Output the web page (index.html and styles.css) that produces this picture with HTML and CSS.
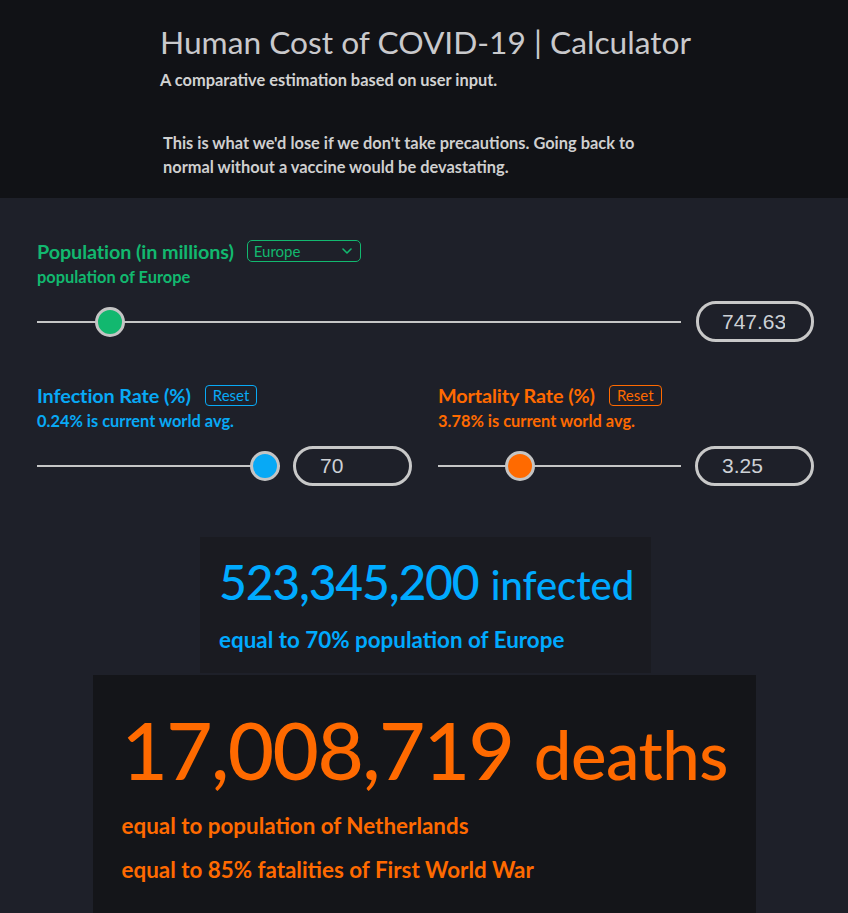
FILE: index.html
```html
<!DOCTYPE html>
<html lang="en">
<head>
<meta charset="utf-8">
<title>Human Cost of COVID-19 | Calculator</title>
<link rel="stylesheet" href="styles.css">
</head>
<body>
<header class="hero">
  <h1 class="title">Human Cost of COVID-19 | Calculator</h1>
  <p class="subtitle">A comparative estimation based on user input.</p>
  <p class="intro">This is what we'd lose if we don't take precautions. Going back to<br>normal without a vaccine would be devastating.</p>
</header>
<main class="main">
  <section class="control green">
    <div class="label-row">
      <span class="label">Population (in millions)</span>
      <div class="select">
        <span>Europe</span>
        <svg class="chev" width="10" height="6" viewBox="0 0 10 6"><path d="M1 1 L5 5 L9 1" fill="none" stroke="currentColor" stroke-width="1.6" stroke-linecap="round" stroke-linejoin="round"/></svg>
      </div>
    </div>
    <div class="hint">population of Europe</div>
    <div class="slider-row wide">
      <div class="slider"><div class="track"></div><div class="thumb" style="left:58px"></div></div>
      <div class="num"><span>747.63</span></div>
    </div>
  </section>
  <div class="cols">
    <section class="control blue">
      <div class="label-row">
        <span class="label">Infection Rate (%)</span>
        <span class="reset">Reset</span>
      </div>
      <div class="hint">0.24% is current world avg.</div>
      <div class="slider-row">
        <div class="slider"><div class="track"></div><div class="thumb" style="left:213px"></div></div>
        <div class="num"><span>70</span></div>
      </div>
    </section>
    <section class="control orange">
      <div class="label-row">
        <span class="label">Mortality Rate (%)</span>
        <span class="reset">Reset</span>
      </div>
      <div class="hint">3.78% is current world avg.</div>
      <div class="slider-row">
        <div class="slider"><div class="track"></div><div class="thumb" style="left:67px"></div></div>
        <div class="num"><span>3.25</span></div>
      </div>
    </section>
  </div>
  <div class="results">
    <div class="card infected">
      <div class="big"><span class="n">523,345,200</span> <span class="w">infected</span></div>
      <p class="eq">equal to 70% population of Europe</p>
    </div>
    <div class="card deaths">
      <div class="big"><span class="n">17,008,719</span> <span class="w">deaths</span></div>
      <p class="eq">equal to population of Netherlands</p>
      <p class="eq">equal to 85% fatalities of First World War</p>
    </div>
  </div>
</main>
</body>
</html>
```
FILE: styles.css
```css
* { box-sizing: border-box; }
html, body { margin: 0; padding: 0; }
body {
  background: #1e2029;
  font-family: Lato, "Open Sans", sans-serif;
  color: #c8c8c8;
  width: 848px;
  height: 913px;
  overflow: hidden;
}
.hero {
  background: #111216;
  height: 198px;
  padding: 22px 0 0 160px;
}
.title {
  margin: 0;
  font-size: 31.7px;
  line-height: 40px;
  font-weight: 400;
  color: #c9c9cc;
}
.subtitle {
  margin: 8px 0 0;
  font-size: 16.4px;
  line-height: 20px;
  font-weight: 700;
  color: #d2d2d2;
}
.intro {
  margin: 41px 0 0 3px;
  font-size: 16.4px;
  line-height: 24px;
  font-weight: 700;
  color: #cfcfcf;
}
.main {
  padding: 42px 34px 0 37px;
}
.green { color: #12b86f; }
.blue { color: #08a9f5; }
.orange { color: #ff6a00; }
.label-row {
  display: flex;
  align-items: center;
  height: 22px;
}
.label {
  font-size: 19.8px;
  font-weight: 700;
  letter-spacing: -0.1px;
}
.select {
  margin-left: 13px;
  width: 114px;
  height: 22px;
  border: 1px solid currentColor;
  border-radius: 5px;
  display: flex;
  align-items: center;
  justify-content: space-between;
  padding: 0 8px 0 6px;
  font-size: 15px;
}
.chev { display: block; }
.reset {
  margin-left: 14px;
  height: 21px;
  padding: 0 7px;
  border: 1px solid currentColor;
  border-radius: 4px;
  font-size: 15px;
  line-height: 19px;
}
.hint {
  margin-top: 5px;
  font-size: 16.4px;
  line-height: 20px;
  font-weight: 700;
}
.slider-row {
  display: flex;
  align-items: center;
  gap: 13px;
  height: 40px;
  margin-top: 15px;
}
.slider-row.wide {
  gap: 15px;
  height: 41px;
  margin-top: 14px;
}
.slider {
  position: relative;
  flex: 1;
  height: 30px;
}
.track {
  position: absolute;
  left: 0;
  right: 0;
  top: 14px;
  height: 2px;
  background: #c6c6c6;
}
.thumb {
  position: absolute;
  top: 0;
  width: 30px;
  height: 30px;
  border-radius: 50%;
  border: 3px solid #c4c4c4;
  background: currentColor;
}
.num {
  width: 119px;
  height: 100%;
  border: 3px solid #c8c8c8;
  border-radius: 20px;
  padding: 0 0 0 24px;
  display: flex;
  align-items: center;
  overflow: hidden;
  font-family: "Liberation Sans", Arial, sans-serif;
  font-size: 21px;
  color: #cdd1d6;
}
.wide .num { width: 118px; padding-left: 23px; }
.wide .num span { width: 63px; overflow: hidden; white-space: nowrap; }
.cols {
  display: grid;
  grid-template-columns: 375px 376px;
  column-gap: 26px;
  margin-top: 42px;
}
.cols .orange .slider-row { gap: 14px; }
.results {
  margin: 51px -34px 0 -37px;
  display: flex;
  flex-direction: column;
  align-items: center;
}
.card p { margin: 0; }
.infected {
  width: 451px;
  background: #1a1b21;
  color: #00aaff;
  padding: 15px 0 18px 19px;
  margin-left: 3px;
}
.big { white-space: nowrap; }
.big .w { line-height: 1; }
.infected .big { font-size: 48px; line-height: 60px; }
.infected .n { font-weight: 500; letter-spacing: -1.2px; }
.infected .w { font-size: 40px; font-weight: 500; }
.eq {
  font-size: 22.4px;
  line-height: 30px;
  font-weight: 700;
}
.infected .eq { margin-top: 13px; }
.deaths {
  width: 663px;
  margin-top: 2px;
  background: #141519;
  color: #ff6a00;
  padding: 26px 0 40px 29px;
}
.deaths .big { font-size: 80px; line-height: 96px; }
.deaths .n { font-weight: 500; letter-spacing: -1.6px; }
.deaths .w { font-size: 67px; font-weight: 500; letter-spacing: -0.5px; }
.deaths .eq:first-of-type { margin-top: 14px; }
.deaths .eq + .eq { margin-top: 14px; }
```
